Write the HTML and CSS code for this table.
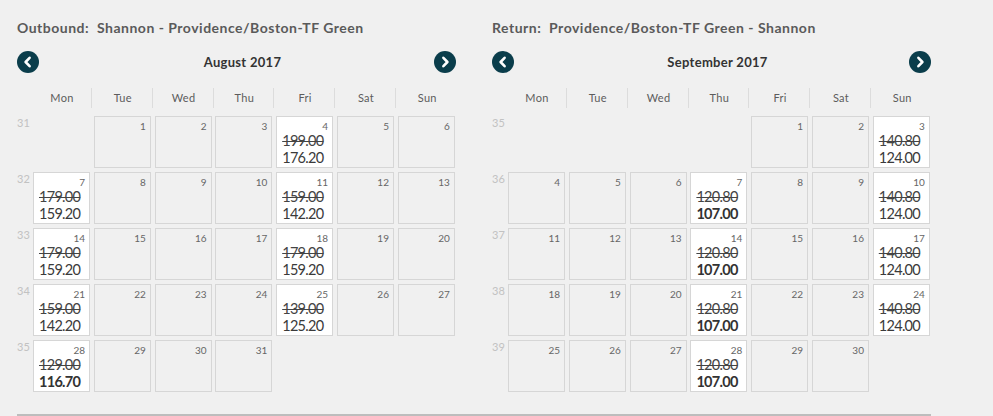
FILE: index.html
```html
<!DOCTYPE html>
<html>
<head>
<meta charset="utf-8">
<link rel="stylesheet" href="styles.css">
</head>
<body>
<div class="page">
  <div class="cals">
    <section class="cal">
      <h2 class="route">Outbound:&nbsp; Shannon - Providence/Boston-TF Green</h2>
      <div class="nav">
        <span class="arrow"><svg viewBox="0 0 22 22" width="22" height="22"><circle cx="11" cy="11" r="11" fill="#0a3d4b"/><path d="M12.6 6.8 L8.6 11 L12.6 15.2" fill="none" stroke="#fff" stroke-width="2.6" stroke-linecap="round" stroke-linejoin="round"/></svg></span>
        <span class="month">August 2017</span>
        <span class="arrow"><svg viewBox="0 0 22 22" width="22" height="22"><circle cx="11" cy="11" r="11" fill="#0a3d4b"/><path d="M9.4 6.8 L13.4 11 L9.4 15.2" fill="none" stroke="#fff" stroke-width="2.6" stroke-linecap="round" stroke-linejoin="round"/></svg></span>
      </div>
      <div class="days">
        <span class="wk"></span>
        <span class="dh">Mon</span><span class="dh">Tue</span><span class="dh">Wed</span><span class="dh">Thu</span><span class="dh">Fri</span><span class="dh">Sat</span><span class="dh last">Sun</span>
      </div>
      <div class="grid">
        <span class="wn">31</span>
        <span class="blank"></span>
        <div class="cell"><span class="d">1</span></div>
        <div class="cell"><span class="d">2</span></div>
        <div class="cell"><span class="d">3</span></div>
        <div class="cell price"><span class="d">4</span><s class="old">199.00</s><span class="new">176.20</span></div>
        <div class="cell"><span class="d">5</span></div>
        <div class="cell"><span class="d">6</span></div>

        <span class="wn">32</span>
        <div class="cell price"><span class="d">7</span><s class="old">179.00</s><span class="new">159.20</span></div>
        <div class="cell"><span class="d">8</span></div>
        <div class="cell"><span class="d">9</span></div>
        <div class="cell"><span class="d">10</span></div>
        <div class="cell price"><span class="d">11</span><s class="old">159.00</s><span class="new">142.20</span></div>
        <div class="cell"><span class="d">12</span></div>
        <div class="cell"><span class="d">13</span></div>

        <span class="wn">33</span>
        <div class="cell price"><span class="d">14</span><s class="old">179.00</s><span class="new">159.20</span></div>
        <div class="cell"><span class="d">15</span></div>
        <div class="cell"><span class="d">16</span></div>
        <div class="cell"><span class="d">17</span></div>
        <div class="cell price"><span class="d">18</span><s class="old">179.00</s><span class="new">159.20</span></div>
        <div class="cell"><span class="d">19</span></div>
        <div class="cell"><span class="d">20</span></div>

        <span class="wn">34</span>
        <div class="cell price"><span class="d">21</span><s class="old">159.00</s><span class="new">142.20</span></div>
        <div class="cell"><span class="d">22</span></div>
        <div class="cell"><span class="d">23</span></div>
        <div class="cell"><span class="d">24</span></div>
        <div class="cell price"><span class="d">25</span><s class="old">139.00</s><span class="new">125.20</span></div>
        <div class="cell"><span class="d">26</span></div>
        <div class="cell"><span class="d">27</span></div>

        <span class="wn">35</span>
        <div class="cell price"><span class="d">28</span><s class="old">129.00</s><span class="new best">116.70</span></div>
        <div class="cell"><span class="d">29</span></div>
        <div class="cell"><span class="d">30</span></div>
        <div class="cell"><span class="d">31</span></div>
        <span class="blank"></span><span class="blank"></span><span class="blank"></span>
      </div>
    </section>

    <section class="cal">
      <h2 class="route">Return:&nbsp; Providence/Boston-TF Green - Shannon</h2>
      <div class="nav">
        <span class="arrow"><svg viewBox="0 0 22 22" width="22" height="22"><circle cx="11" cy="11" r="11" fill="#0a3d4b"/><path d="M12.6 6.8 L8.6 11 L12.6 15.2" fill="none" stroke="#fff" stroke-width="2.6" stroke-linecap="round" stroke-linejoin="round"/></svg></span>
        <span class="month">September 2017</span>
        <span class="arrow"><svg viewBox="0 0 22 22" width="22" height="22"><circle cx="11" cy="11" r="11" fill="#0a3d4b"/><path d="M9.4 6.8 L13.4 11 L9.4 15.2" fill="none" stroke="#fff" stroke-width="2.6" stroke-linecap="round" stroke-linejoin="round"/></svg></span>
      </div>
      <div class="days">
        <span class="wk"></span>
        <span class="dh">Mon</span><span class="dh">Tue</span><span class="dh">Wed</span><span class="dh">Thu</span><span class="dh">Fri</span><span class="dh">Sat</span><span class="dh last">Sun</span>
      </div>
      <div class="grid">
        <span class="wn">35</span>
        <span class="blank"></span><span class="blank"></span><span class="blank"></span><span class="blank"></span>
        <div class="cell"><span class="d">1</span></div>
        <div class="cell"><span class="d">2</span></div>
        <div class="cell price"><span class="d">3</span><s class="old">140.80</s><span class="new">124.00</span></div>

        <span class="wn">36</span>
        <div class="cell"><span class="d">4</span></div>
        <div class="cell"><span class="d">5</span></div>
        <div class="cell"><span class="d">6</span></div>
        <div class="cell price"><span class="d">7</span><s class="old">120.80</s><span class="new best">107.00</span></div>
        <div class="cell"><span class="d">8</span></div>
        <div class="cell"><span class="d">9</span></div>
        <div class="cell price"><span class="d">10</span><s class="old">140.80</s><span class="new">124.00</span></div>

        <span class="wn">37</span>
        <div class="cell"><span class="d">11</span></div>
        <div class="cell"><span class="d">12</span></div>
        <div class="cell"><span class="d">13</span></div>
        <div class="cell price"><span class="d">14</span><s class="old">120.80</s><span class="new best">107.00</span></div>
        <div class="cell"><span class="d">15</span></div>
        <div class="cell"><span class="d">16</span></div>
        <div class="cell price"><span class="d">17</span><s class="old">140.80</s><span class="new">124.00</span></div>

        <span class="wn">38</span>
        <div class="cell"><span class="d">18</span></div>
        <div class="cell"><span class="d">19</span></div>
        <div class="cell"><span class="d">20</span></div>
        <div class="cell price"><span class="d">21</span><s class="old">120.80</s><span class="new best">107.00</span></div>
        <div class="cell"><span class="d">22</span></div>
        <div class="cell"><span class="d">23</span></div>
        <div class="cell price"><span class="d">24</span><s class="old">140.80</s><span class="new">124.00</span></div>

        <span class="wn">39</span>
        <div class="cell"><span class="d">25</span></div>
        <div class="cell"><span class="d">26</span></div>
        <div class="cell"><span class="d">27</span></div>
        <div class="cell price"><span class="d">28</span><s class="old">120.80</s><span class="new best">107.00</span></div>
        <div class="cell"><span class="d">29</span></div>
        <div class="cell"><span class="d">30</span></div>
        <span class="blank"></span>
      </div>
    </section>
  </div>
  <div class="rule"></div>
</div>
</body>
</html>
```

FILE: styles.css
```css
html, body {
  margin: 0;
  padding: 0;
  background: #f0f0f0;
}
body {
  font-family: "Lato", "Open Sans", sans-serif;
  color: #333;
}
.page {
  padding: 19px 0 0 17px;
  width: 914px;
}
.cals {
  display: flex;
  gap: 36px;
}
.cal {
  width: 439px;
}
.route {
  margin: 0;
  font-size: 14px;
  line-height: 18px;
  font-weight: 700;
  letter-spacing: 0.5px;
  color: #5a5a5a;
  white-space: nowrap;
}
.nav {
  margin-top: 14px;
  height: 22px;
  display: flex;
  align-items: center;
}
.arrow {
  width: 22px;
  height: 22px;
  display: block;
}
.arrow svg { display: block; }
.month {
  flex: 1;
  text-align: center;
  padding-left: 12px;
  font-size: 13px;
  font-weight: 700;
  letter-spacing: 0.3px;
  color: #333;
}
.days, .grid {
  display: grid;
  grid-template-columns: 12.2px repeat(7, 57px);
  column-gap: 3.8px;
}
.days {
  margin-top: 15px;
  height: 20px;
}
.dh {
  font-size: 11px;
  line-height: 20px;
  color: #5c5c5c;
  letter-spacing: 0.3px;
  text-align: center;
  border-right: 1px solid #dcdcdc;
  margin-right: -2px;
}
.dh.last { border-right: none; }
.grid {
  margin-top: 8px;
  grid-auto-rows: 52px;
  row-gap: 4px;
}
.grid .wn {
  font-size: 11px;
  color: #c2c2c2;
  line-height: 14px;
  white-space: nowrap;
}
.cell {
  box-sizing: border-box;
  border: 1px solid #d6d6d6;
  background: #f0f0f0;
  position: relative;
  display: flex;
  flex-direction: column;
  padding: 15px 0 0 5px;
}
.cell.price { background: #fff; }
.cell .d {
  position: absolute;
  top: 3px;
  right: 4px;
  font-size: 10px;
  line-height: 12px;
  color: #666;
}
.old, .new {
  font-size: 14.5px;
  line-height: 17px;
  letter-spacing: -0.7px;
}
.old { color: #444; }
.new { color: #3a3a3a; }
.new.best { font-weight: 700; color: #333; }
.rule {
  margin-top: 22px;
  height: 3px;
  background: #bdbdbd;
}
```
